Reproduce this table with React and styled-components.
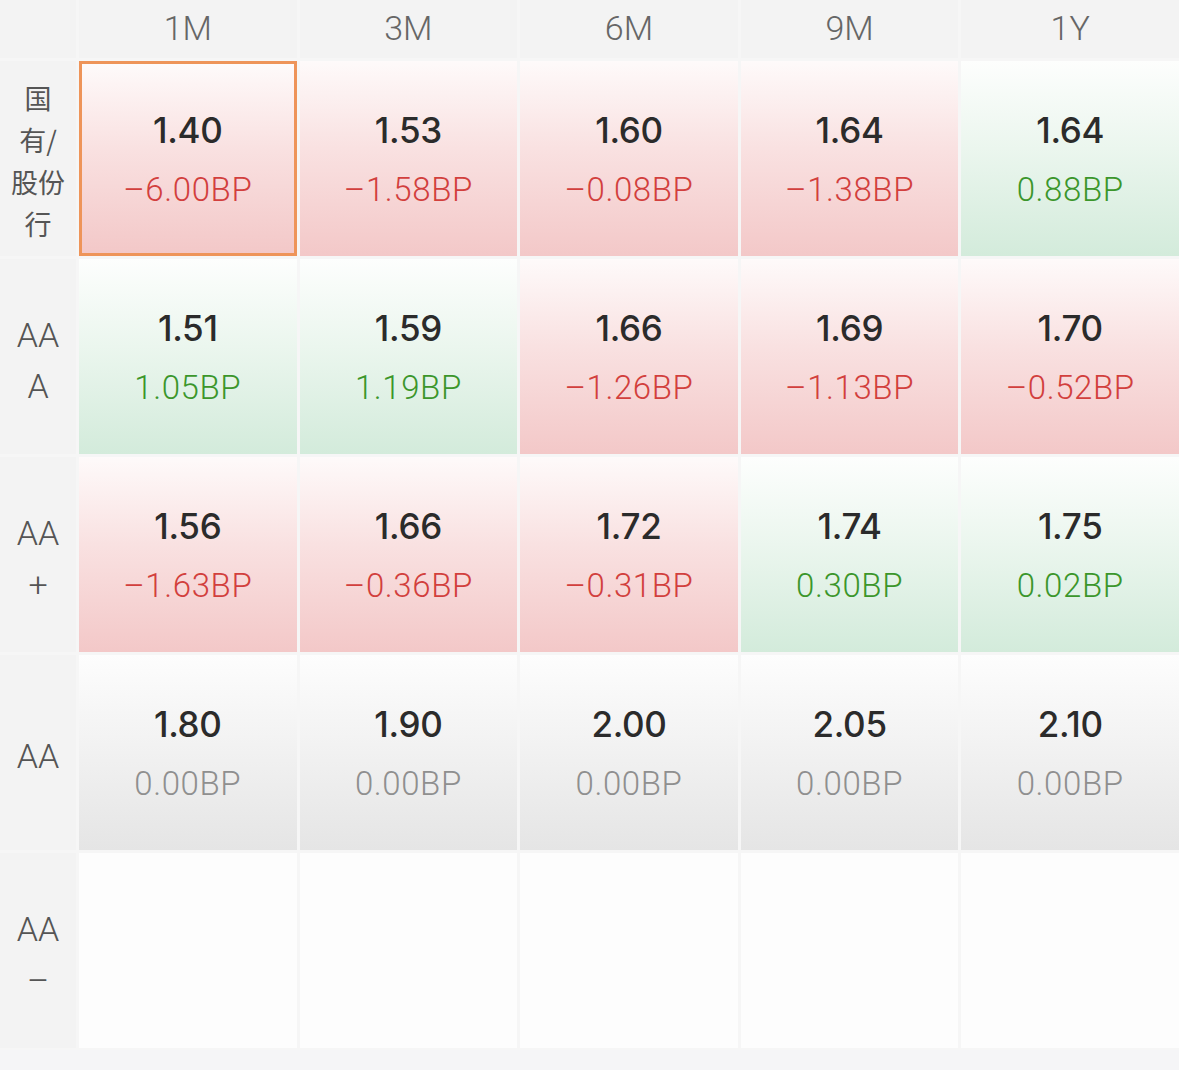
import React, { useState } from 'react';
import styled, { createGlobalStyle } from 'styled-components';

const GlobalStyle = createGlobalStyle`
  html, body {
    margin: 0;
    padding: 0;
    background: #f5f5f7;
    font-family: Roboto, "Liberation Sans", "Noto Sans CJK SC", sans-serif;
  }
`;

const terms = ['1M', '3M', '6M', '9M', '1Y'];

const rows = [
  {
    label: ['国', '有/', '股份', '行'],
    cjk: true,
    cells: [
      ['1.40', -6.0],
      ['1.53', -1.58],
      ['1.60', -0.08],
      ['1.64', -1.38],
      ['1.64', 0.88],
    ],
  },
  {
    label: ['AA', 'A'],
    cells: [
      ['1.51', 1.05],
      ['1.59', 1.19],
      ['1.66', -1.26],
      ['1.69', -1.13],
      ['1.70', -0.52],
    ],
  },
  {
    label: ['AA', '+'],
    cells: [
      ['1.56', -1.63],
      ['1.66', -0.36],
      ['1.72', -0.31],
      ['1.74', 0.3],
      ['1.75', 0.02],
    ],
  },
  {
    label: ['AA'],
    cells: [
      ['1.80', 0],
      ['1.90', 0],
      ['2.00', 0],
      ['2.05', 0],
      ['2.10', 0],
    ],
  },
  {
    label: ['AA', '–'],
    cells: [null, null, null, null, null],
  },
];

const tones = {
  down: { bg: 'linear-gradient(180deg, #fefafa 0%, #f9e1e1 45%, #f3c8c8 100%)', fg: '#d23f3d' },
  up: { bg: 'linear-gradient(180deg, #fdfefd 0%, #ebf6ee 45%, #d3ebdb 100%)', fg: '#3b962b' },
  flat: { bg: 'linear-gradient(180deg, #fdfdfd 0%, #f1f1f1 50%, #e5e5e5 100%)', fg: '#8f8f8f' },
  empty: { bg: '#fdfdfd', fg: '#999999' },
};

const toneOf = (bp) => {
  if (bp === undefined) return 'empty';
  if (bp < 0) return 'down';
  if (bp > 0) return 'up';
  return 'flat';
};

const formatBp = (bp) => {
  const text = Math.abs(bp).toFixed(2) + 'BP';
  return bp < 0 ? '–' + text : text;
};

const Page = styled.div`
  width: 1179px;
  height: 1070px;
  background: #f5f5f7;
  overflow: hidden;
`;

const Table = styled.div`
  display: grid;
  grid-template-columns: 76px repeat(5, 1fr);
  grid-template-rows: 58px repeat(5, 195px);
  gap: 3px;
  background: #f6f6f6;
  padding-bottom: 2px;
`;

const Corner = styled.div`
  background: #f3f3f3;
`;

const HeadCell = styled.div`
  display: flex;
  align-items: center;
  justify-content: center;
  background: #f3f3f3;
  color: #666;
  font-size: 34px;
  font-weight: 300;
  padding-bottom: 2px;
`;

const RowLabel = styled.div`
  display: flex;
  flex-direction: column;
  align-items: center;
  justify-content: center;
  background: #f3f3f3;
  color: #555;
  font-family: ${(p) => (p.$cjk ? '"Noto Sans CJK SC", sans-serif' : 'Roboto, "Liberation Sans", sans-serif')};
  font-size: ${(p) => (p.$cjk ? '27px' : '34px')};
  line-height: ${(p) => (p.$cjk ? '42px' : '51px')};
  font-weight: ${(p) => (p.$cjk ? 400 : 300)};
  padding-top: ${(p) => (p.$cjk ? '4px' : '8px')};
`;

const Cell = styled.div`
  box-sizing: border-box;
  display: flex;
  flex-direction: column;
  align-items: center;
  justify-content: center;
  gap: 20px;
  background: ${(p) => tones[p.$tone].bg};
  border: ${(p) => (p.$active ? '3px solid #ee9459' : 'none')};
  cursor: pointer;
  padding-top: 2px;
`;

const Value = styled.div`
  color: #2b2b2b;
  font-family: Inter, Roboto, sans-serif;
  font-size: 35px;
  font-weight: 500;
  line-height: 40px;
  letter-spacing: -0.3px;
`;

const Change = styled.div`
  color: ${(p) => tones[p.$tone].fg};
  font-size: 33px;
  font-weight: 300;
  letter-spacing: 0.6px;
  line-height: 40px;
`;

export default function App() {
  const [active, setActive] = useState('0-0');

  return (
    <Page>
      <GlobalStyle />
      <Table>
        <Corner />
        {terms.map((t) => (
          <HeadCell key={t}>{t}</HeadCell>
        ))}
        {rows.map((row, r) => (
          <React.Fragment key={r}>
            <RowLabel $cjk={row.cjk}>
              {row.label.map((line, i) => (
                <span key={i}>{line}</span>
              ))}
            </RowLabel>
            {row.cells.map((cell, c) => {
              const tone = toneOf(cell ? cell[1] : undefined);
              const id = `${r}-${c}`;
              return (
                <Cell
                  key={id}
                  $tone={tone}
                  $active={active === id && !!cell}
                  onClick={() => cell && setActive(id)}
                >
                  {cell && (
                    <>
                      <Value>{cell[0]}</Value>
                      <Change $tone={tone}>{formatBp(cell[1])}</Change>
                    </>
                  )}
                </Cell>
              );
            })}
          </React.Fragment>
        ))}
      </Table>
    </Page>
  );
}
